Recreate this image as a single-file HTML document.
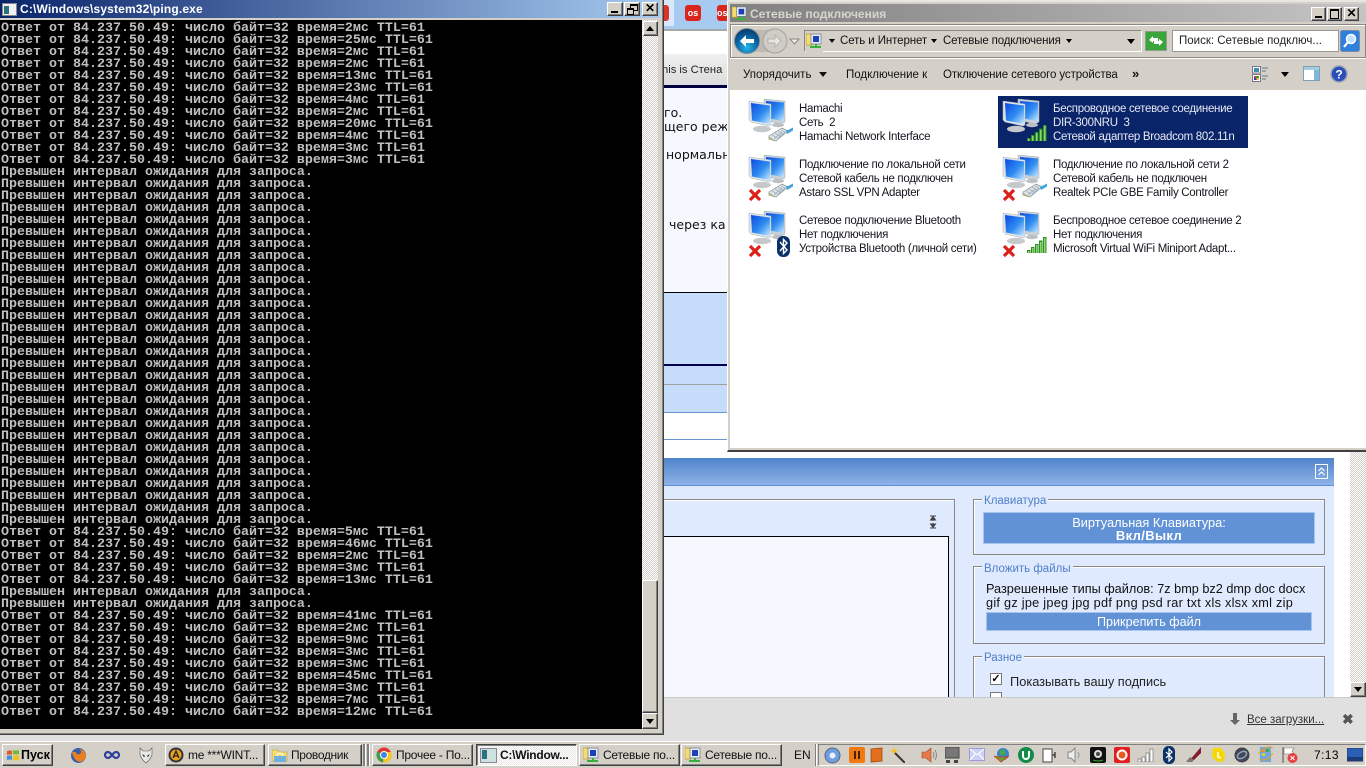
<!DOCTYPE html>
<html lang="ru"><head><meta charset="utf-8"><title>Desktop</title>
<style>
html,body{margin:0;padding:0;width:1366px;height:768px;overflow:hidden;background:#fff}
body{position:relative;font-family:"Liberation Sans",sans-serif;font-size:12px;color:#111}
.a{position:absolute;white-space:nowrap}
.r{position:absolute;box-sizing:border-box;background:#d4d0c8;border:1px solid;border-color:#fff #404040 #404040 #fff;box-shadow:inset -1px -1px #808080}
.chk{position:absolute;background:repeating-conic-gradient(#d4d0c8 0 25%,#fff 0 50%) 0 0/2px 2px}
#con{position:absolute;left:1px;top:23px;font:bold 13.33px/12px "Liberation Mono",monospace;color:#c0c0c0;white-space:pre}
.it{position:absolute;font-size:11.5px;line-height:14px;color:#15151f;white-space:nowrap;letter-spacing:-.3px}
.tb{position:absolute;top:744px;height:22px;box-sizing:border-box;background:#d4d0c8;border:1px solid;border-color:#fff #404040 #404040 #fff;box-shadow:inset -1px -1px #808080;font-size:12px;line-height:21px;white-space:nowrap;letter-spacing:-.25px}
.fs{position:absolute;box-sizing:border-box;border:1px solid #8a8780;box-shadow:1px 1px 0 #fff inset}
.lg{position:absolute;background:#dfeafe;color:#4f7fc8;font-size:11.5px;line-height:13px;padding:0 2px}
.bb{position:absolute;box-sizing:border-box;background:#6192d6;border:1px solid #a6c4ee;color:#fff;text-align:center;font-size:12.6px}
.w{font:12.5px/14px 'DejaVu Sans',sans-serif;color:#111;overflow:hidden}
</style></head><body>
<svg width="0" height="0" style="position:absolute">
<defs>
<linearGradient id="sc" x1="0" y1="0" x2="1" y2="1"><stop offset="0" stop-color="#0a4ae0"/><stop offset=".55" stop-color="#2f8cf0"/><stop offset="1" stop-color="#c8e8ff"/></linearGradient>
<symbol id="mon" viewBox="0 0 46 46">
<ellipse cx="30" cy="27" rx="6" ry="2.200" fill="#bcc0c4"/>
<path d="M16 1l21 2v21l-4 2-17-4z" fill="#c8d0d8" stroke="#a8b2bc" stroke-width=".5"/>
<path d="M18 3l18 1.500V23l-18-3z" fill="url(#sc)"/>
<ellipse cx="14" cy="31" rx="9" ry="3.200" fill="#c6c9cc"/>
<path d="M1 3l22 3v21l-2 1-18-4-2-2z" fill="#dde3e8" stroke="#a8b2bc" stroke-width=".5"/>
<path d="M3 5l19 2.500V26L4 22.500z" fill="url(#sc)"/>
</symbol>
<symbol id="cab" viewBox="0 0 26 16">
<path d="M1 9L14 1l6 3L8 14l-7-2z" fill="#dbe2e8" stroke="#7d8b96" stroke-width=".7"/>
<path d="M4 8l5 3M7 6l5 3M10 4l5 3M13 3l4 2M6 12l8-7M10 11l7-6" stroke="#93a0aa" stroke-width=".6"/>
<path d="M1 10l5 3v1l-5-2z" fill="#a8a860"/>
<path d="M18 4l7-3.500v3L19 7z" fill="#3fa6dc"/>
</symbol>
<symbol id="x" viewBox="0 0 14 14"><path d="M2 2l10 10M12 2L2 12" stroke="#dd1f1a" stroke-width="3.200"/></symbol>
<symbol id="sig" viewBox="0 0 20 16"><path d="M0 16v-3h3.500v3zM4 16v-6h3.500v6zM8 16V7h3.500v9zM12 16V3.500h3.500V16zM16 16V0h3.500v16z" fill="#2f8f2f"/><path d="M1 16v-2h1.500v2zM5 16v-5h1.500v5zM9 16V8h1.500v8zM13 16V5h1.500v11zM17 16V1h1.500v15z" fill="#8fd860"/></symbol>
<symbol id="ni" viewBox="0 0 16 18"><path d="M0 2h4l1 1h1v10H0z" fill="#f3dc72" stroke="#b99a2e" stroke-width=".7"/><path d="M5 2h10v10H5z" fill="#e8edf4" stroke="#6a7690" stroke-width=".7"/><path d="M7 4h6v6H7z" fill="#1f3fb8"/><path d="M9 12h2v2h4v2H4v-2h5z" fill="#37b03a"/></symbol>
</defs></svg>

<!-- browser behind -->
<div class="a" style="left:664px;top:0;width:64px;height:29px;background:#a6caf0"></div>
<div class="a" style="left:664px;top:0;width:10px;height:26px;background:#d8e8fa"></div>
<div class="a" style="left:664px;top:5px;width:5px;height:16px;background:#d9352a;border-radius:0 3px 3px 0"></div>
<div class="a" style="left:685px;top:5px;width:16px;height:16px;background:#d9251d;border-radius:3px;color:#fff;font:bold 9px/16px 'Liberation Sans';text-align:center">os</div>
<div class="a" style="left:717px;top:5px;width:10px;height:16px;background:#d9251d;border-radius:3px 0 0 3px;color:#fff;font:bold 9px/16px 'Liberation Sans';overflow:hidden">os</div>
<div class="a" style="left:664px;top:29px;width:64px;height:2px;background:#a8a8a8"></div>
<div class="a" style="left:664px;top:31px;width:64px;height:23px;background:#fff"></div>
<div class="a" style="left:664px;top:54px;width:64px;height:31px;background:linear-gradient(#f0f0f0,#dcdcdc);font-size:11.2px;line-height:32px;color:#222;overflow:hidden;text-indent:-2px">his is Стена</div>
<div class="a" style="left:664px;top:85px;width:64px;height:3px;background:#000040"></div>
<div class="a" style="left:664px;top:88px;width:64px;height:204px;background:#f5f8ff"></div>
<div class="a w" style="left:664px;top:106px;width:64px">го.</div>
<div class="a w" style="left:664px;top:120px;width:64px">щего реж</div>
<div class="a w" style="left:666px;top:148px;width:62px">нормальн</div>
<div class="a w" style="left:669px;top:218px;width:59px">через ка</div>
<div class="a" style="left:664px;top:292px;width:64px;height:1px;background:#000"></div>
<div class="a" style="left:664px;top:293px;width:64px;height:119px;background:#c5dcfb"></div>
<div class="a" style="left:664px;top:364px;width:64px;height:2px;background:#000050"></div>
<div class="a" style="left:664px;top:384px;width:64px;height:1px;background:#a0a0a0"></div>
<div class="a" style="left:664px;top:412px;width:64px;height:1px;background:#6a97d0"></div>
<div class="a" style="left:664px;top:413px;width:64px;height:45px;background:#fff"></div>
<div class="a" style="left:664px;top:439px;width:64px;height:1px;background:#6a97d0"></div>

<!-- lower page -->
<div class="a" style="left:664px;top:452px;width:686px;height:245px;background:#fff"></div>
<div class="chk" style="left:1350px;top:452px;width:16px;height:245px"></div>
<div class="r" style="left:1350px;top:682px;width:16px;height:15px"></div>
<div class="a" style="left:1354px;top:687px;width:0;height:0;border:4px solid transparent;border-top:5px solid #000;border-bottom:0"></div>
<div class="a" style="left:664px;top:458px;width:670px;height:239px;background:#dfeafe"></div>
<div class="a" style="left:664px;top:458px;width:670px;height:28px;background:linear-gradient(#4f83cb,#8eb3e8);border-bottom:1px solid #5f8fd8;box-sizing:border-box"></div>
<svg class="a" style="left:1315px;top:464px" width="13" height="15"><rect x=".5" y=".5" width="12" height="14" fill="none" stroke="#fff"/><path d="M3.500 7l3-3 3 3M3.500 11l3-3 3 3" fill="none" stroke="#fff" stroke-width="1.200"/></svg>

<div class="fs" style="left:640px;top:499px;width:315px;height:200px"></div>
<div class="a" style="left:664px;top:536px;width:285px;height:161px;background:#f5f8ff;border:solid #000;border-width:1px 1px 0 0;box-sizing:border-box"></div>
<svg class="a" style="left:929px;top:514px" width="8" height="16"><path d="M1 2h6M4 2.500L1.500 6h5zM4 6v1M1 14h6M4 13.500L1.500 10h5zM4 10V9" stroke="#444" fill="#444"/></svg>

<div class="fs" style="left:973px;top:499px;width:352px;height:56px"></div>
<div class="lg" style="left:982px;top:495px">Клавиатура</div>
<div class="bb" style="left:983px;top:512px;width:332px;height:32px;line-height:13px;padding-top:3px;font-size:12.8px">Виртуальная Клавиатура:<br><b style="font-size:13px;letter-spacing:.35px">Вкл/Выкл</b></div>

<div class="fs" style="left:973px;top:566px;width:352px;height:78px"></div>
<div class="lg" style="left:982px;top:563px">Вложить файлы</div>
<div class="a" style="left:986px;top:582px;font-size:12.7px;line-height:14px;color:#111">Разрешенные типы файлов: 7z bmp bz2 dmp doc docx<br><span style="letter-spacing:.27px">gif gz jpe jpeg jpg pdf png psd rar txt xls xlsx xml zip</span></div>
<div class="bb" style="left:986px;top:612px;width:326px;height:19px;line-height:18px">Прикрепить файл</div>

<div class="fs" style="left:973px;top:656px;width:352px;height:50px"></div>
<div class="lg" style="left:982px;top:652px">Разное</div>
<div class="a" style="left:990px;top:673px;width:10px;height:10px;background:#fff;border:1px solid #777;font:bold 11px/10px 'Liberation Sans';color:#000;text-align:center">✓</div>
<div class="a" style="left:1010px;top:675px;font-size:12.8px;line-height:14px;color:#222">Показывать вашу подпись</div>
<div class="a" style="left:990px;top:692px;width:10px;height:10px;background:#fff;border:1px solid #777"></div>

<!-- download bar -->
<div class="a" style="left:664px;top:697px;width:702px;height:45px;background:#e0e0e0;border-top:1px solid #c8c8c8;box-sizing:border-box"></div>
<div class="a" style="left:0;top:735px;width:1366px;height:7px;background:#e0e0e0"></div>
<svg class="a" style="left:1229px;top:712px" width="12" height="14"><path d="M4 1h4v7h3l-5 5-5-5h3z" fill="#666"/></svg>
<div class="a" style="left:1247px;top:713px;font-size:11.5px;line-height:14px;color:#333;text-decoration:underline">Все загрузки...</div>
<div class="a" style="left:1342px;top:712px;font:bold 14px/14px 'Liberation Sans';color:#555">✖</div>

<!-- network window -->
<div class="a" style="left:727px;top:0;width:639px;height:452px;background:#d4d0c8;border-left:1px solid #fff;box-sizing:border-box;border-bottom:2px solid #404040"></div>
<div class="a" style="left:727px;top:0;width:639px;height:2px;background:#e8e6e0"></div>
<div class="a" style="left:730px;top:4px;width:636px;height:18px;background:linear-gradient(90deg,#808080,#c4c4c4)"></div>
<svg class="a" style="left:732px;top:5px" width="15" height="17"><use href="#ni"/></svg>
<div class="a" style="left:750px;top:6px;font:bold 12px/17px 'Liberation Sans';color:#d8d5ce">Сетевые подключения</div>
<div class="r" style="left:1311px;top:7px;width:15px;height:14px"></div>
<div class="a" style="left:1315px;top:16px;width:7px;height:2px;background:#000"></div>
<div class="r" style="left:1327px;top:7px;width:15px;height:14px"></div>
<div class="a" style="left:1330px;top:9px;width:7px;height:7px;border:1px solid #000;border-top-width:2px"></div>
<div class="r" style="left:1344px;top:7px;width:15px;height:14px;font:bold 12px/11px 'Liberation Sans';color:#000;text-align:center">✕</div>

<div class="a" style="left:730px;top:24px;width:636px;height:34px;box-sizing:border-box;border:1px solid #8a8780;box-shadow:inset 1px 1px #fff,0 1px #fff"></div>
<svg class="a" style="left:733px;top:27px" width="70" height="28">
<defs><radialGradient id="bk" cx=".5" cy=".75" r=".75"><stop offset="0" stop-color="#24b8e8"/><stop offset=".6" stop-color="#0a5f9e"/><stop offset="1" stop-color="#063a66"/></radialGradient></defs>
<path d="M14 3h28v22H14z" fill="#bdbab3"/>
<circle cx="14" cy="14" r="12.500" fill="url(#bk)" stroke="#7a8c9a"/>
<path d="M7 14l6-6v4h8v4h-8v4z" fill="#fff"/>
<circle cx="42" cy="14" r="12" fill="#cfccc6" stroke="#a5a29c"/>
<path d="M48 14l-6-6v4h-7v4h7v4z" fill="#e6e4df" stroke="#a8a59f" stroke-width=".7"/>
<path d="M57 12h9l-4.500 5z" fill="#eee" stroke="#8a8780"/>
</svg>
<div class="a" style="left:804px;top:30px;width:338px;height:22px;box-sizing:border-box;border:1px solid #8a8780;border-right-color:#fff;border-bottom-color:#fff"></div>
<div class="a" style="left:806px;top:31px;width:17px;height:21px;background:#d4d0c8"></div>
<svg class="a" style="left:806px;top:32px" width="16" height="18"><use href="#ni"/></svg>
<div class="a" style="left:829px;top:39px;border:3px solid transparent;border-top:4px solid #000;border-bottom:0"></div>
<div class="a" style="left:840px;top:34px;font-size:11.5px;line-height:14px;color:#111;letter-spacing:-.1px">Сеть и Интернет</div>
<div class="a" style="left:931px;top:39px;border:3px solid transparent;border-top:4px solid #000;border-bottom:0"></div>
<div class="a" style="left:943px;top:34px;font-size:11.5px;line-height:14px;color:#111;letter-spacing:-.15px">Сетевые подключения</div>
<div class="a" style="left:1066px;top:39px;border:3px solid transparent;border-top:4px solid #000;border-bottom:0"></div>
<div class="a" style="left:1127px;top:39px;border:4px solid transparent;border-top:5px solid #000;border-bottom:0"></div>
<svg class="a" style="left:1145px;top:31px" width="22" height="20"><rect x=".5" y=".5" width="21" height="19" fill="#3aa53a" stroke="#8aa08a"/><path d="M4 9l4-4v2h5v3H8v2zM18 11l-4 4v-2H9v-3h5V8z" fill="#fff"/></svg>
<div class="a" style="left:1172px;top:30px;width:167px;height:22px;box-sizing:border-box;background:#fff;border:1px solid #9a9890;font-size:11.5px;line-height:21px;padding-left:6px;color:#222">Поиск: Сетевые подключ...</div>
<svg class="a" style="left:1340px;top:30px" width="20" height="22"><rect x=".5" y=".5" width="19" height="21" rx="2" fill="#2f7fdc" stroke="#7a8aa8"/><circle cx="11" cy="9" r="4.500" fill="#bfe0ff" stroke="#fff" stroke-width="1.500"/><path d="M8 12l-4 5" stroke="#fff" stroke-width="2.200"/></svg>

<div class="a" style="left:743px;top:68px;font-size:11.5px;line-height:14px">Упорядочить</div>
<div class="a" style="left:819px;top:72px;border:4px solid transparent;border-top:5px solid #111;border-bottom:0"></div>
<div class="a" style="left:846px;top:68px;font-size:11.5px;line-height:14px">Подключение к</div>
<div class="a" style="left:943px;top:68px;font-size:11.5px;line-height:14px;letter-spacing:-.1px">Отключение сетевого устройства</div>
<div class="a" style="left:1132px;top:67px;font:bold 13px/14px 'Liberation Sans'">»</div>
<svg class="a" style="left:1252px;top:66px" width="17" height="16"><rect x=".5" y=".5" width="8" height="6.500" fill="#fff" stroke="#778"/><rect x="2" y="2" width="5" height="4" fill="#3b8fb0"/><rect x=".5" y="8.500" width="8" height="7" fill="#fff" stroke="#778"/><rect x="2" y="10" width="2.500" height="2" fill="#d33"/><rect x="4.500" y="10" width="2.500" height="2" fill="#3a3"/><rect x="2" y="12" width="2.500" height="2" fill="#33d"/><rect x="4.500" y="12" width="2.500" height="2" fill="#dc3"/><path d="M10 2h6M10 5h4M10 10h6M10 13h4" stroke="#7a8a9a" stroke-width="1.200"/></svg>
<div class="a" style="left:1281px;top:72px;border:4px solid transparent;border-top:5px solid #000;border-bottom:0"></div>
<svg class="a" style="left:1303px;top:66px" width="17" height="15"><rect x=".5" y=".5" width="16" height="14" fill="#fff" stroke="#7f9fb8"/><rect x="1" y="1" width="15" height="3" fill="#a8cce0"/><rect x="11" y="4" width="5" height="10" fill="#7db8d8"/></svg>
<svg class="a" style="left:1330px;top:65px" width="18" height="18"><circle cx="9" cy="9" r="8" fill="#2a50b8" stroke="#9aa0b8" stroke-width="1.500"/><text x="9" y="13.500" text-anchor="middle" font-family="Liberation Sans" font-weight="bold" font-size="12" fill="#fff">?</text></svg>

<div class="a" style="left:730px;top:90px;width:636px;height:358px;background:#fff"></div>
<div class="a" style="left:998px;top:96px;width:250px;height:52px;background:#0a246a"></div>

<svg class="a" style="left:748px;top:98px" width="46" height="46"><use href="#mon"/><svg x="20" y="29" width="26" height="16"><use href="#cab"/></svg></svg>
<div class="it" style="left:799px;top:102px">Hamachi<br>Сеть&nbsp; 2<br>Hamachi Network Interface</div>
<svg class="a" style="left:1002px;top:98px" width="46" height="46"><use href="#mon"/><svg x="25" y="27" width="20" height="16"><use href="#sig"/></svg></svg>
<div class="it" style="left:1053px;top:102px;color:#e6e8f2">Беспроводное сетевое соединение<br>DIR-300NRU&nbsp; 3<br>Сетевой адаптер Broadcom 802.11n</div>

<svg class="a" style="left:748px;top:154px" width="46" height="50"><use href="#mon" width="46" height="46"/><svg x="20" y="29" width="26" height="16"><use href="#cab"/></svg><svg x="0" y="34" width="14" height="14"><use href="#x"/></svg></svg>
<div class="it" style="left:799px;top:158px">Подключение по локальной сети<br>Сетевой кабель не подключен<br>Astaro SSL VPN Adapter</div>
<svg class="a" style="left:1002px;top:154px" width="46" height="50"><use href="#mon" width="46" height="46"/><svg x="20" y="29" width="26" height="16"><use href="#cab"/></svg><svg x="0" y="34" width="14" height="14"><use href="#x"/></svg></svg>
<div class="it" style="left:1053px;top:158px">Подключение по локальной сети 2<br>Сетевой кабель не подключен<br>Realtek PCIe GBE Family Controller</div>

<svg class="a" style="left:748px;top:210px" width="46" height="50"><use href="#mon" width="46" height="46"/><svg x="0" y="34" width="14" height="14"><use href="#x"/></svg><rect x="29" y="26" width="13" height="21" rx="6" fill="#0b3268"/><path d="M32 32l7 8-3.500 3.500V29.500L39 33l-7 8" fill="none" stroke="#fff" stroke-width="1.400"/></svg>
<div class="it" style="left:799px;top:214px">Сетевое подключение Bluetooth<br>Нет подключения<br>Устройства Bluetooth (личной сети)</div>
<svg class="a" style="left:1002px;top:210px" width="46" height="50"><use href="#mon" width="46" height="46"/><svg x="0" y="34" width="14" height="14"><use href="#x"/></svg><svg x="25" y="27" width="20" height="16"><use href="#sig"/></svg></svg>
<div class="it" style="left:1053px;top:214px">Беспроводное сетевое соединение 2<br>Нет подключения<br>Microsoft Virtual WiFi Miniport Adapt...</div>

<!-- console window -->
<div class="a" style="left:0;top:0;width:664px;height:735px;background:#d4d0c8;border-right:1px solid #404040;border-bottom:1px solid #404040;box-sizing:border-box;box-shadow:inset -1px -1px #808080"></div>
<div class="a" style="left:0;top:0;width:660px;height:18px;background:linear-gradient(90deg,#0a246a,#a6caf0)"></div>
<div class="a" style="left:2px;top:3px;width:13px;height:11px;background:#f0f0f0;border:1px solid #888"></div>
<div class="a" style="left:4px;top:6px;width:5px;height:8px;background:#2a6f7f"></div>
<div class="a" style="left:20px;top:1px;font:bold 12px/16px 'Liberation Sans';color:#fff;letter-spacing:.15px">C:\Windows\system32\ping.exe</div>
<div class="r" style="left:607px;top:2px;width:16px;height:14px"></div>
<div class="a" style="left:611px;top:11px;width:7px;height:2px;background:#000"></div>
<div class="r" style="left:624px;top:2px;width:16px;height:14px"></div>
<div class="a" style="left:630px;top:4px;width:6px;height:4px;border:1px solid #000;border-top-width:2px"></div>
<div class="a" style="left:627px;top:8px;width:5px;height:4px;border:1px solid #000;border-top-width:2px;background:#d4d0c8"></div>
<div class="r" style="left:642px;top:2px;width:16px;height:14px;font:bold 12px/11px 'Liberation Sans';color:#000;text-align:center">✕</div>
<div class="a" style="left:0;top:20px;width:642px;height:709px;background:#000"></div>
<div class="chk" style="left:642px;top:20px;width:16px;height:709px"></div>
<div class="r" style="left:643px;top:21px;width:15px;height:15px"></div>
<div class="a" style="left:646px;top:26px;border:4px solid transparent;border-bottom:5px solid #000;border-top:0"></div>
<div class="r" style="left:642px;top:580px;width:16px;height:133px"></div>
<div class="r" style="left:642px;top:713px;width:16px;height:16px"></div>
<div class="a" style="left:646px;top:719px;border:4px solid transparent;border-top:5px solid #000;border-bottom:0"></div>
<div id="con">Ответ от 84.237.50.49: число байт=32 время=2мс TTL=61
Ответ от 84.237.50.49: число байт=32 время=25мс TTL=61
Ответ от 84.237.50.49: число байт=32 время=2мс TTL=61
Ответ от 84.237.50.49: число байт=32 время=2мс TTL=61
Ответ от 84.237.50.49: число байт=32 время=13мс TTL=61
Ответ от 84.237.50.49: число байт=32 время=23мс TTL=61
Ответ от 84.237.50.49: число байт=32 время=4мс TTL=61
Ответ от 84.237.50.49: число байт=32 время=2мс TTL=61
Ответ от 84.237.50.49: число байт=32 время=20мс TTL=61
Ответ от 84.237.50.49: число байт=32 время=4мс TTL=61
Ответ от 84.237.50.49: число байт=32 время=3мс TTL=61
Ответ от 84.237.50.49: число байт=32 время=3мс TTL=61
Превышен интервал ожидания для запроса.
Превышен интервал ожидания для запроса.
Превышен интервал ожидания для запроса.
Превышен интервал ожидания для запроса.
Превышен интервал ожидания для запроса.
Превышен интервал ожидания для запроса.
Превышен интервал ожидания для запроса.
Превышен интервал ожидания для запроса.
Превышен интервал ожидания для запроса.
Превышен интервал ожидания для запроса.
Превышен интервал ожидания для запроса.
Превышен интервал ожидания для запроса.
Превышен интервал ожидания для запроса.
Превышен интервал ожидания для запроса.
Превышен интервал ожидания для запроса.
Превышен интервал ожидания для запроса.
Превышен интервал ожидания для запроса.
Превышен интервал ожидания для запроса.
Превышен интервал ожидания для запроса.
Превышен интервал ожидания для запроса.
Превышен интервал ожидания для запроса.
Превышен интервал ожидания для запроса.
Превышен интервал ожидания для запроса.
Превышен интервал ожидания для запроса.
Превышен интервал ожидания для запроса.
Превышен интервал ожидания для запроса.
Превышен интервал ожидания для запроса.
Превышен интервал ожидания для запроса.
Превышен интервал ожидания для запроса.
Превышен интервал ожидания для запроса.
Ответ от 84.237.50.49: число байт=32 время=5мс TTL=61
Ответ от 84.237.50.49: число байт=32 время=46мс TTL=61
Ответ от 84.237.50.49: число байт=32 время=2мс TTL=61
Ответ от 84.237.50.49: число байт=32 время=3мс TTL=61
Ответ от 84.237.50.49: число байт=32 время=13мс TTL=61
Превышен интервал ожидания для запроса.
Превышен интервал ожидания для запроса.
Ответ от 84.237.50.49: число байт=32 время=41мс TTL=61
Ответ от 84.237.50.49: число байт=32 время=2мс TTL=61
Ответ от 84.237.50.49: число байт=32 время=9мс TTL=61
Ответ от 84.237.50.49: число байт=32 время=3мс TTL=61
Ответ от 84.237.50.49: число байт=32 время=3мс TTL=61
Ответ от 84.237.50.49: число байт=32 время=45мс TTL=61
Ответ от 84.237.50.49: число байт=32 время=3мс TTL=61
Ответ от 84.237.50.49: число байт=32 время=7мс TTL=61
Ответ от 84.237.50.49: число байт=32 время=12мс TTL=61</div>

<!-- taskbar -->
<div class="a" style="left:0;top:741px;width:1366px;height:27px;background:#d4d0c8;border-top:1px solid #fff;box-sizing:border-box"></div>
<div class="tb" style="left:2px;width:51px;font-weight:bold;font-size:12.5px;padding-left:18px;color:#000;letter-spacing:0">Пуск</div>
<svg class="a" style="left:6px;top:749px" width="14" height="13"><path d="M1 2q3-1 5 0v4q-2-1-5 0z" fill="#e2582a"/><path d="M7 1q3 1 6 0v4q-3 1-6 0z" fill="#7ab833"/><path d="M1 7q3-1 5 0v4q-2-1-5 0z" fill="#3c8ee0"/><path d="M7 6q3 1 6 0v5q-3 1-6 0z" fill="#f2c31c"/></svg>
<svg class="a" style="left:70px;top:747px" width="17" height="17"><circle cx="8.500" cy="8.500" r="7.500" fill="#3a5fa8"/><path d="M2 5q2 9 8 10 5-1 6-6-1-6-6-7 2 3 0 5-4 1-4-2-2 0-4 0z" fill="#e8801e"/></svg>
<svg class="a" style="left:103px;top:750px" width="18" height="10"><path d="M5 2a3 3 0 1 0 0 6c3 0 5-6 8-6a3 3 0 1 1 0 6c-3 0-5-6-8-6z" fill="none" stroke="#2c3f9c" stroke-width="2.200"/></svg>
<svg class="a" style="left:139px;top:747px" width="14" height="17"><path d="M1 1l3 3h6l3-3v7q-2 5-6 8Q3 13 1 8z" fill="#e8e8e8" stroke="#555" stroke-width=".6"/><path d="M3 7l3 2-1 1zM11 7L8 9l1 1z" fill="#000"/></svg>
<div class="tb" style="left:165px;width:100px;padding-left:22px">me ***WINT...</div>
<svg class="a" style="left:168px;top:747px" width="16" height="16"><circle cx="8" cy="8" r="7.500" fill="#333"/><circle cx="8" cy="8" r="5.500" fill="#e8a020"/><path d="M5 11l3-7 3 7M6 9h4" fill="none" stroke="#222" stroke-width="1.300"/></svg>
<div class="tb" style="left:268px;width:94px;padding-left:22px;letter-spacing:-.35px">Проводник</div>
<svg class="a" style="left:272px;top:747px" width="16" height="16"><path d="M0 3h6l1 2h8v9H0z" fill="#f3dc72" stroke="#b99a2e" stroke-width=".6"/><path d="M2 9h12v6H2z" fill="#6fb0dc"/><path d="M5 9a3 3 0 0 1 6 0" fill="none" stroke="#fff"/></svg>
<div class="a" style="left:363px;top:744px;width:2px;height:22px;background:#808080;border-right:1px solid #fff"></div>
<div class="a" style="left:367px;top:744px;width:2px;height:22px;background:#808080;border-right:1px solid #fff"></div>
<div class="tb" style="left:372px;width:101px;padding-left:23px">Прочее - По...</div>
<svg class="a" style="left:376px;top:747px" width="16" height="16"><circle cx="8" cy="8" r="7.500" fill="#db3a2c"/><path d="M8 8L1.300 4.500A7.500 7.500 0 0 0 7 15.400z" fill="#3aa34a"/><path d="M8 8l-1 7.400A7.500 7.500 0 0 0 15 5H8z" fill="#f6c81e"/><circle cx="8" cy="8" r="3.500" fill="#3f82e8" stroke="#fff"/></svg>
<div class="tb" style="left:476px;width:101px;padding-left:23px;font-weight:bold;border-color:#404040 #fff #fff #404040;box-shadow:inset 1px 1px #808080;background:repeating-conic-gradient(#fff 0 25%,#e8e6e2 0 50%) 0 0/2px 2px">C:\Window...</div>
<div class="a" style="left:480px;top:748px;width:15px;height:13px;background:#cfe0e0;border:1px solid #889"></div>
<div class="a" style="left:482px;top:750px;width:5px;height:9px;background:#2a6f7f"></div>
<div class="tb" style="left:579px;width:101px;padding-left:23px">Сетевые по...</div>
<svg class="a" style="left:583px;top:746px" width="16" height="18"><use href="#ni"/></svg>
<div class="tb" style="left:681px;width:101px;padding-left:23px">Сетевые по...</div>
<svg class="a" style="left:685px;top:746px" width="16" height="18"><use href="#ni"/></svg>
<div class="a" style="left:794px;top:748px;font-size:12px;line-height:14px">EN</div>
<div class="a" style="left:815px;top:744px;width:1px;height:22px;background:#808080;border-right:1px solid #fff"></div>
<div class="a" style="left:818px;top:744px;width:548px;height:22px;border:1px solid;border-color:#808080 #fff #fff #808080;box-sizing:border-box"></div>

<svg class="a" style="left:824px;top:747px" width="17" height="17"><circle cx="8.500" cy="8.500" r="7.500" fill="#6f9fe0" stroke="#567"/><circle cx="8.500" cy="8.500" r="3" fill="#eef"/></svg>
<svg class="a" style="left:849px;top:747px" width="16" height="16"><rect width="16" height="16" rx="2" fill="#f07a10"/><path d="M5 4h2v8H5zM9 4h2v8H9z" fill="#4a2000"/></svg>
<svg class="a" style="left:870px;top:747px" width="13" height="16"><path d="M1 2l11-1v13L1 15z" fill="#e0701e" stroke="#a04a10" stroke-width=".8"/></svg>
<svg class="a" style="left:889px;top:747px" width="16" height="16"><path d="M6 6l10 10" stroke="#333" stroke-width="2"/><path d="M5 0l1 3 3 1-3 1-1 3-1-3-3-1 3-1z" fill="#f2c31c"/></svg>
<svg class="a" style="left:921px;top:747px" width="16" height="16"><path d="M1 5h4l5-4v14l-5-4H1z" fill="#e8794a" stroke="#9a4a2a" stroke-width=".6"/><path d="M12 5q2 3 0 6M14 3q3 5 0 10" fill="none" stroke="#888"/></svg>
<svg class="a" style="left:945px;top:747px" width="15" height="16"><rect width="14" height="11" fill="#777" stroke="#444"/><rect x="1" y="13" width="4" height="3" fill="#444"/><rect x="9" y="13" width="4" height="3" fill="#444"/></svg>
<svg class="a" style="left:969px;top:748px" width="16" height="14"><rect x=".5" y=".5" width="15" height="12" fill="#cfd0f5" stroke="#9a9ae0"/><path d="M1 1l7 6 7-6M1 12l5-6M15 12l-5-6" stroke="#fff" fill="none"/></svg>
<svg class="a" style="left:994px;top:747px" width="16" height="16"><circle cx="9" cy="7" r="6" fill="#3a7fd0"/><path d="M5 4l5-2 2 5-5 2z" fill="#4aa84a"/><path d="M0 9l7 6 8-6-4 1H4z" fill="#7a9a2a" stroke="#c04020" stroke-width=".8"/></svg>
<svg class="a" style="left:1018px;top:747px" width="16" height="16"><circle cx="8" cy="8" r="8" fill="#118a4a"/><path d="M5 4v5a3 3 0 0 0 6 0V4" fill="none" stroke="#fff" stroke-width="2"/></svg>
<svg class="a" style="left:1042px;top:747px" width="16" height="16"><rect x="1" y="2" width="9" height="13" fill="#fff" stroke="#444"/><path d="M10 8h3M13 5v6" stroke="#444" stroke-width="1.500"/></svg>
<svg class="a" style="left:1067px;top:747px" width="14" height="16"><path d="M1 5h3l4-4v14l-4-4H1z" fill="#eee" stroke="#888"/><path d="M11 5q2 3 0 6" fill="none" stroke="#999"/></svg>
<svg class="a" style="left:1090px;top:747px" width="16" height="16"><rect width="16" height="16" rx="2" fill="#111"/><circle cx="8" cy="7" r="4" fill="#ddd"/><circle cx="8" cy="7" r="2" fill="#444"/><path d="M3 13q5 2 10 0" stroke="#3a3" fill="none"/></svg>
<svg class="a" style="left:1114px;top:747px" width="16" height="16"><rect width="16" height="16" rx="2" fill="#e02020"/><circle cx="8" cy="8" r="5.500" fill="#fff"/><circle cx="8" cy="8" r="3.500" fill="#e85a20"/></svg>
<svg class="a" style="left:1137px;top:748px" width="17" height="14"><path d="M1 14v-3h3v3zM5 14V9h3v5zM9 14V5h3v9zM13 14V1h3v13z" fill="#fff" stroke="#777" stroke-width=".7"/></svg>
<svg class="a" style="left:1163px;top:746px" width="12" height="18"><rect width="12" height="18" rx="5.500" fill="#0b3268"/><path d="M3 6l6 6-3 3V3l3 3-6 6" fill="none" stroke="#fff" stroke-width="1.200"/></svg>
<svg class="a" style="left:1185px;top:746px" width="17" height="17"><path d="M4 15L16 1v6L9 14z" fill="#8a1a2a"/><path d="M1 16l4-5 4 3-2 2z" fill="#777"/></svg>
<svg class="a" style="left:1210px;top:747px" width="16" height="16"><path d="M3 1h8l4 6-1 7-6 1-6-5z" fill="#f5d800"/><path d="M8 5v5l3 1" stroke="#fff" fill="none" stroke-width="1.500"/></svg>
<svg class="a" style="left:1234px;top:747px" width="16" height="16"><circle cx="8" cy="8" r="7.500" fill="#445"/><ellipse cx="8" cy="8" rx="5" ry="3" transform="rotate(-30 8 8)" fill="none" stroke="#8ab" stroke-width="1.500"/></svg>
<svg class="a" style="left:1257px;top:746px" width="17" height="17"><rect x="3" y="1" width="11" height="15" fill="#6fa8dc"/><rect x="5" y="3" width="3" height="3" fill="#e84"/><rect x="9" y="3" width="3" height="3" fill="#4a4"/><rect x="5" y="7" width="3" height="3" fill="#dc3"/><path d="M1 8q8-10 15-6M16 7Q9 17 2 13" fill="none" stroke="#e8a020"/></svg>
<svg class="a" style="left:1281px;top:746px" width="17" height="18"><path d="M2 1v16" stroke="#555"/><path d="M3 2h10l-2 3 2 3H3z" fill="#fff" stroke="#777" stroke-width=".6"/><circle cx="11.500" cy="12" r="5" fill="#e84040"/><path d="M9.500 10l4 4M13.500 10l-4 4" stroke="#fff"/></svg>
<div class="a" style="left:1314px;top:748px;font-size:12px;line-height:14px;color:#000;letter-spacing:.4px">7:13</div>
<svg class="a" style="left:1347px;top:748px" width="16" height="14"><rect width="16" height="13" fill="#2a5fb8" stroke="#335"/><rect y="9" width="16" height="4" fill="#1a3a78"/></svg>
</body></html>
